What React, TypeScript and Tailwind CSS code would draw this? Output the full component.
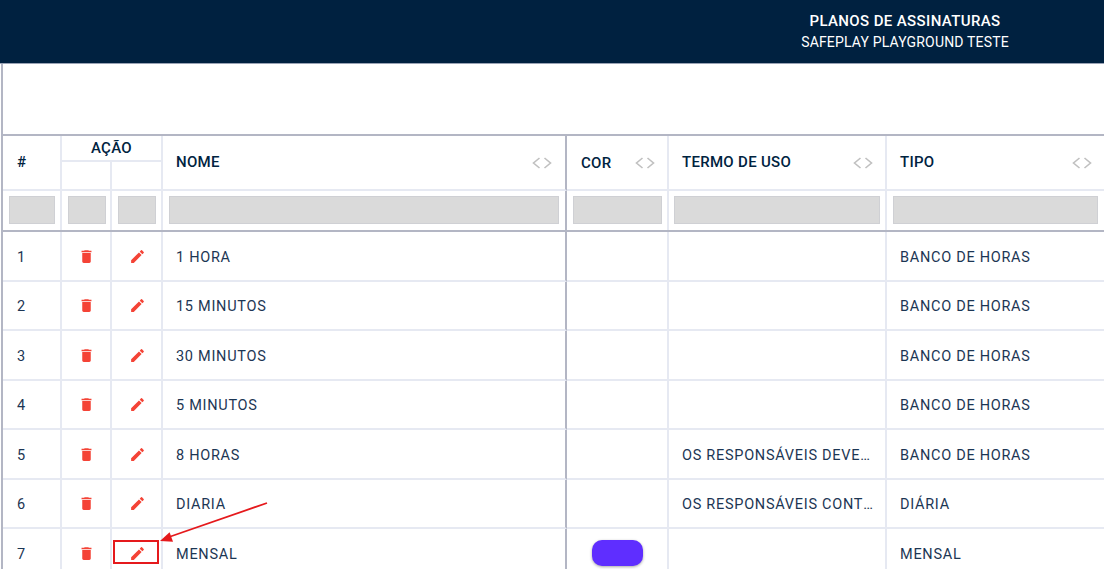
const cols = "grid grid-cols-[59px_50px_51px_404px_102px_218px_1fr]";
const cell = "border-r-2 border-b-2 border-[#e6e9f2] flex items-center";

const rows = [
  ["1", "1 HORA", "", "", "BANCO DE HORAS"],
  ["2", "15 MINUTOS", "", "", "BANCO DE HORAS"],
  ["3", "30 MINUTOS", "", "", "BANCO DE HORAS"],
  ["4", "5 MINUTOS", "", "", "BANCO DE HORAS"],
  ["5", "8 HORAS", "", "OS RESPONSÁVEIS DEVEM ASSINAR O TERMO", "BANCO DE HORAS"],
  ["6", "DIARIA", "", "OS RESPONSÁVEIS CONTRATANTES DEVEM", "DIÁRIA"],
  ["7", "MENSAL", "purple", "", "MENSAL"],
];

function Trash() {
  return (
    <svg width="17" height="17" viewBox="0 0 24 24" fill="#f44336">
      <path d="M6 19c0 1.1.9 2 2 2h8c1.1 0 2-.9 2-2V7H6v12zM19 4h-3.5l-1-1h-5l-1 1H5v2h14V4z" />
    </svg>
  );
}

function Pencil() {
  return (
    <svg width="17" height="17" viewBox="0 0 24 24" fill="#f44336">
      <path d="M3 17.25V21h3.75L17.81 9.94l-3.75-3.75L3 17.25zM20.71 7.04a1 1 0 0 0 0-1.41l-2.34-2.34a1 1 0 0 0-1.41 0l-1.83 1.83 3.75 3.75 1.83-1.83z" />
    </svg>
  );
}

function Arrows() {
  return (
    <svg width="20" height="12" viewBox="0 0 20 12" fill="none" stroke="#c0c0c0" strokeWidth="1.6">
      <path d="M7.5 1 1.5 6l6 5" />
      <path d="M12.5 1l6 5-6 5" />
    </svg>
  );
}

function Filter() {
  return <div className="w-full h-[28px] bg-[#dadada] border border-[#cfd0d4]" />;
}

export default function App() {
  return (
    <div className="relative w-[1104px] h-[569px] overflow-hidden bg-white font-['Roboto',sans-serif] text-[#00233f]">
      <header className="h-[64px] bg-[#002140] border-b border-[#9aa3b5] flex justify-end pr-[95px] pt-[12px]">
        <div className="w-[208px] flex flex-col items-center text-white text-[14px] leading-[18px] whitespace-nowrap">
          <div className="font-medium text-[15px] tracking-[0.38px] h-[18px]">PLANOS DE ASSINATURAS</div>
          <div className="mt-[3px] tracking-[0.17px]">SAFEPLAY PLAYGROUND TESTE</div>
        </div>
      </header>

      <main className="ml-px border-l-2 border-[#b3b6c4] h-[505px]">
        <div className="h-[70px]" />
        <div className="border-t-2 border-[#b3b6c4]">
          <div className={`${cols} h-[55px] text-[15px] font-medium tracking-[0.3px]`}>
            <div className={`${cell} pl-[14px]`}>#</div>
            <div className="col-span-2 border-r-2 border-b-2 border-[#e6e9f2] grid grid-cols-[50px_1fr] grid-rows-[26px_1fr]">
              <div className="col-span-2 border-b-2 border-[#e6e9f2] flex items-center justify-center pt-[1px]">AÇÃO</div>
              <div className="border-r-2 border-[#e6e9f2]" />
              <div />
            </div>
            <div className={`${cell} pl-[13px] pr-[13px] justify-between border-r-[#b3b6c4]`}>
              <span>NOME</span>
              <Arrows />
            </div>
            <div className={`${cell} pl-[14px] pr-[12px] justify-between`}>
              <span className="pt-[2px]">COR</span>
              <Arrows />
            </div>
            <div className={`${cell} pl-[13px] pr-[12px] justify-between`}>
              <span>TERMO DE USO</span>
              <Arrows />
            </div>
            <div className="border-b-2 border-[#e6e9f2] flex items-center pl-[13px] pr-[12px] justify-between">
              <span>TIPO</span>
              <Arrows />
            </div>
          </div>

          <div className={`${cols} h-[41px] border-b-2 border-[#b3b6c4]`}>
            <div className="border-r-2 border-[#e6e9f2] pl-[6px] pr-[5px] pt-[5px]"><Filter /></div>
            <div className="border-r-2 border-[#e6e9f2] pl-[6px] pr-[4px] pt-[5px]"><Filter /></div>
            <div className="border-r-2 border-[#e6e9f2] pl-[6px] pr-[5px] pt-[5px]"><Filter /></div>
            <div className="border-r-2 border-[#b3b6c4] pl-[6px] pr-[6px] pt-[5px]"><Filter /></div>
            <div className="border-r-2 border-[#e6e9f2] pl-[6px] pr-[5px] pt-[5px]"><Filter /></div>
            <div className="border-r-2 border-[#e6e9f2] pl-[5px] pr-[5px] pt-[5px]"><Filter /></div>
            <div className="pl-[6px] pr-[6px] pt-[5px]"><Filter /></div>
          </div>

          {rows.map((r) => (
            <div key={r[0]} className={`${cols} h-[49.5px] text-[14.5px] tracking-[0.72px] text-[#1c3654]`}>
              <div className={`${cell} pl-[14px] pt-[4px]`}>{r[0]}</div>
              <div className={`${cell} justify-center pt-px pl-px`}><Trash /></div>
              <div className={`${cell} justify-center pt-px pl-[2px]`}><Pencil /></div>
              <div className={`${cell} pl-[13px] pt-[4px] border-r-[#b3b6c4]`}>{r[1]}</div>
              <div className={`${cell} justify-center`}>
                {r[2] && <span className="w-[51px] h-[26px] rounded-[10px] bg-[#5f2eff] shadow-[0_1px_3px_rgba(0,0,0,0.35)]" />}
              </div>
              <div className={`${cell} pl-[13px] pr-[12px] pt-[4px] min-w-0`}>
                <span className="truncate">{r[3]}</span>
              </div>
              <div className="border-b-2 border-[#e6e9f2] flex items-center pl-[13px] pt-[4px]">{r[4]}</div>
            </div>
          ))}
        </div>
      </main>

      <div className="absolute left-[113px] top-[540px] w-[46px] h-[24px] border-2 border-[#e5191c]" />
      <svg className="absolute left-[155px] top-[498px]" width="116" height="50" viewBox="0 0 116 50" fill="none">
        <path d="M112 5 14 39" stroke="#e5191c" strokeWidth="1.8" />
        <path d="M5 43 14.6 34.3 18 43.7z" fill="#e5191c" />
      </svg>
    </div>
  );
}
